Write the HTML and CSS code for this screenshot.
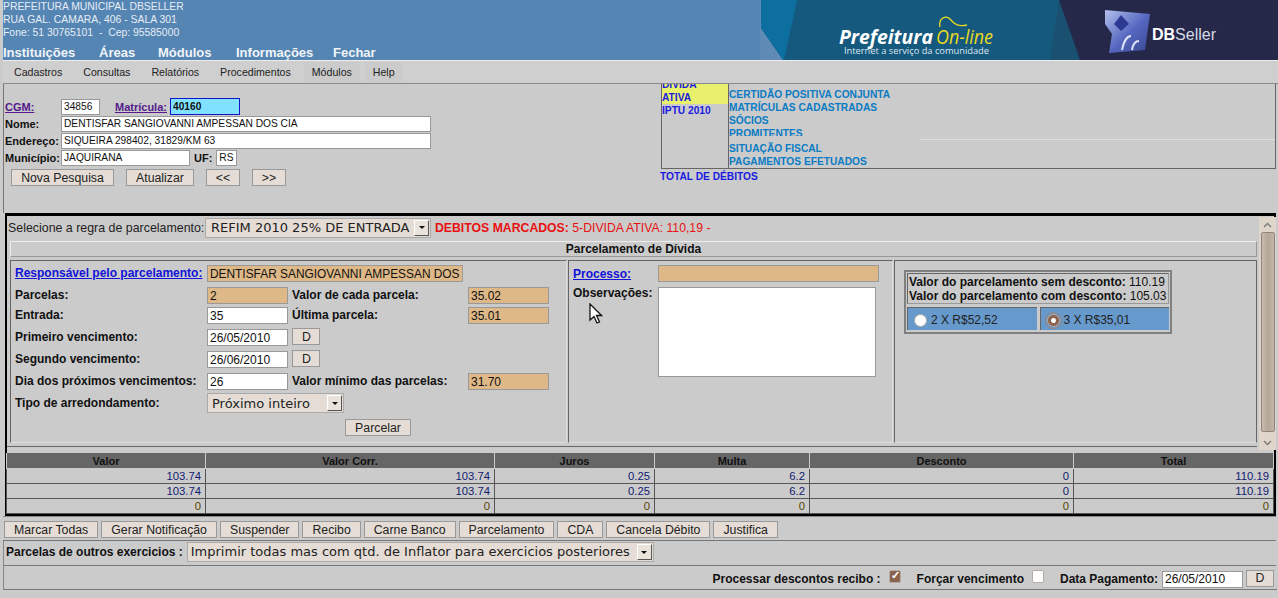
FILE: index.html
```html
<!DOCTYPE html>
<html lang="pt-BR">
<head>
    <meta charset="UTF-8">
    <title>Prefeitura On-line</title>
    <link rel="stylesheet" href="styles.css">
</head>
<body>
    <header class="topo">
        <div class="topo-texto">
            <div class="endereco">PREFEITURA MUNICIPAL DBSELLER<br>RUA GAL. CAMARA, 406 - SALA 301<br>Fone: 51 30765101 &nbsp;-&nbsp; Cep: 95585000</div>
            <nav class="menu-areas">
                <a class="a1">Instituições</a><a class="a2">Áreas</a><a class="a3">Módulos</a><a class="a4">Informações</a><a>Fechar</a>
            </nav>
        </div>
        <div class="banner">
            <svg width="518" height="60" viewBox="0 0 518 60">
                <defs>
                    <linearGradient id="cubo" x1="0" y1="0" x2="1" y2="1">
                        <stop offset="0" stop-color="#b4c0ec"/>
                        <stop offset="0.55" stop-color="#5566c0"/>
                        <stop offset="1" stop-color="#39478f"/>
                    </linearGradient>
                </defs>
                <rect width="518" height="60" fill="#15597f"/>
                <polygon points="0,0 1,0 1,28 23,60 0,60" fill="#5f8ab6"/>
                <polygon points="1,0 37,0 24,60 23,60 1,28" fill="#0d6f9f"/>
                <polygon points="299,0 320,60 290,60" fill="#1b5170"/>
                <polygon points="299,0 518,0 518,60 320,60" fill="#26284a"/>
                <text x="79" y="44" class="pref" textLength="94" lengthAdjust="spacingAndGlyphs">Prefeitura</text>
                <text x="176" y="44" class="online" textLength="57" lengthAdjust="spacingAndGlyphs">On-line</text>
                <path d="M180 27 C178 18 186 15 190 19 C194 24 198 27 207 25" fill="none" stroke="#e9d821" stroke-width="1.3"/>
                <text x="84" y="54" class="slogan" textLength="145" lengthAdjust="spacingAndGlyphs">Internet a serviço da comunidade</text>
                <polygon points="345,10 390,14 385,50 349,53 352,34 345,24" fill="url(#cubo)"/>
                <polygon points="361,15 369,24 361,31 354,24" fill="#2c3a94"/>
                <path d="M362 50 C364 40 368 36 371 36 M372 50 C373 44 376 41 379 41" fill="none" stroke="#dfe5f8" stroke-width="2"/>
                <text x="392" y="40" class="marca"><tspan class="db">DB</tspan><tspan class="seller">Seller</tspan></text>
            </svg>
        </div>
    </header>

    <nav class="menu">
        <a>Cadastros</a><a>Consultas</a><a>Relatórios</a><a>Procedimentos</a><a class="ativo">Módulos</a><a class="ativo">Help</a>
    </nav>

    <section class="pesquisa">
        <div class="dados">
            <div class="linha">
                <a class="lk-visitado lb-cgm">CGM: </a>
                <input class="campo w39" value="34856">
                <a class="lk-visitado lb-mat">Matrícula:</a>
                <input class="campo w70 destaque" value="40160">
            </div>
            <div class="linha"><b class="lb-cgm">Nome:</b><input class="campo w370" value="DENTISFAR SANGIOVANNI AMPESSAN DOS CIA"></div>
            <div class="linha"><b class="lb-cgm">Endereço:</b><input class="campo w370" value="SIQUEIRA 298402, 31829/KM 63"></div>
            <div class="linha"><b class="lb-cgm">Município:</b><input class="campo w128" value="JAQUIRANA"><b class="lb-uf">UF:</b><input class="campo w21" value="RS"></div>
            <div class="botoes-pesq">
                <button class="btn b-nova">Nova Pesquisa</button><button class="btn b-atu">Atualizar</button><button class="btn b-seta">&lt;&lt;</button><button class="btn b-seta">&gt;&gt;</button>
            </div>
        </div>
        <div class="quadro-wrap">
            <div class="quadro">
                <div class="tipos">
                    <div class="tipo-ativo"><div class="tipo-nome">DIVIDA<br>ATIVA</div></div>
                    <div class="tipo">IPTU 2010</div>
                </div>
                <div class="links">
                    <a>CERTIDÃO POSITIVA CONJUNTA</a>
                    <a>MATRÍCULAS CADASTRADAS</a>
                    <a>SÓCIOS</a>
                    <a class="prom">PROMITENTES</a>
                    <div class="divisor"></div>
                    <a>SITUAÇÃO FISCAL</a>
                    <a>PAGAMENTOS EFETUADOS</a>
                </div>
            </div>
            <div class="total">TOTAL DE DÉBITOS</div>
        </div>
    </section>

    <section class="parcelamento">
        <div class="conteudo">
            <div class="regra">
                <span>Selecione a regra de parcelamento:</span>
                <div class="select s-regra"><span>REFIM 2010 25% DE ENTRADA</span><i class="seta"></i></div>
                <span class="marcados"><b>DEBITOS MARCADOS:</b> 5-DIVIDA ATIVA: 110,19 -</span>
            </div>
            <div class="titulo">Parcelamento de Dívida</div>
            <div class="paineis">
                <div class="painel p1">
                    <div class="grade">
                        <a class="lk-azul resp">Responsável pelo parcelamento:</a>
                        <input class="campo ro w-resp" value="DENTISFAR SANGIOVANNI AMPESSAN DOS">

                        <b>Parcelas:</b><input class="campo ro w81" value="2">
                        <b>Valor de cada parcela:</b><input class="campo ro w81" value="35.02">

                        <b>Entrada:</b><input class="campo w81" value="35">
                        <b>Última parcela:</b><input class="campo ro w81" value="35.01">

                        <b>Primeiro vencimento:</b><input class="campo w81" value="26/05/2010">
                        <button class="btn b-d">D</button>

                        <b>Segundo vencimento:</b><input class="campo w81" value="26/06/2010">
                        <button class="btn b-d">D</button>

                        <b>Dia dos próximos vencimentos:</b><input class="campo w81" value="26">
                        <b>Valor mínimo das parcelas:</b><input class="campo ro w81" value="31.70">

                        <b class="t-arr">Tipo de arredondamento:</b>
                        <div class="select s-arr"><span>Próximo inteiro</span><i class="seta"></i></div>
                    </div>
                    <div class="parcelar"><button class="btn b-parc">Parcelar</button></div>
                </div>
                <div class="painel p2">
                    <div class="proc"><a class="lk-azul lb-proc">Processo:</a><input class="campo ro w-proc"></div>
                    <div class="obs"><b class="lb-proc">Observações:</b><textarea class="area"></textarea></div>
                    <svg class="cursor" width="14" height="22" viewBox="0 0 14 22"><path d="M1 1 L1 17 L5 13.5 L8 20 L10.5 19 L7.5 12.5 L12.5 12.5 Z" fill="#fff" stroke="#111" stroke-width="1.3"/></svg>
                </div>
                <div class="painel p3">
                    <div class="resumo">
                        <div class="valores">
                            <div><b>Valor do parcelamento sem desconto:</b> 110.19</div>
                            <div><b>Valor do parcelamento com desconto:</b> 105.03</div>
                        </div>
                        <div class="opcoes">
                            <div class="opcao"><i class="radio"></i>2 X R$52,52</div>
                            <div class="opcao"><i class="radio marcado"></i>3 X R$35,01</div>
                        </div>
                    </div>
                </div>
            </div>
            <div class="rolagem">
                <div class="ponta">
                    <svg width="9" height="6" viewBox="0 0 9 6"><path d="M1 5 L4.5 1.5 L8 5" fill="none" stroke="#777" stroke-width="1.3"/></svg>
                </div>
                <div class="trilho"><div class="polegar"></div></div>
                <div class="ponta">
                    <svg width="9" height="6" viewBox="0 0 9 6"><path d="M1 1 L4.5 4.5 L8 1" fill="none" stroke="#777" stroke-width="1.3"/></svg>
                </div>
            </div>
        </div>
        <table class="tabela">
            <colgroup><col class="c1"><col class="c2"><col class="c3"><col class="c4"><col class="c5"><col></colgroup>
            <thead>
                <tr><th>Valor</th><th>Valor Corr.</th><th>Juros</th><th>Multa</th><th>Desconto</th><th>Total</th></tr>
            </thead>
            <tbody>
                <tr class="azul"><td>103.74</td><td>103.74</td><td>0.25</td><td>6.2</td><td>0</td><td>110.19</td></tr>
                <tr class="azul"><td>103.74</td><td>103.74</td><td>0.25</td><td>6.2</td><td>0</td><td>110.19</td></tr>
                <tr class="ouro"><td>0</td><td>0</td><td>0</td><td>0</td><td>0</td><td>0</td></tr>
            </tbody>
        </table>
    </section>

    <div class="acoes">
        <button class="btn">Marcar Todas</button><button class="btn">Gerar Notificação</button><button class="btn">Suspender</button><button class="btn">Recibo</button><button class="btn">Carne Banco</button><button class="btn">Parcelamento</button><button class="btn">CDA</button><button class="btn">Cancela Débito</button><button class="btn">Justifica</button>
    </div>
    <div class="outros">
        <b>Parcelas de outros exercicios :</b>
        <div class="select s-outros"><span>Imprimir todas mas com qtd. de Inflator para exercicios posteriores</span><i class="seta"></i></div>
    </div>
    <div class="rodape">
        <b>Processar descontos recibo :</b><i class="check marcado"></i>
        <b>Forçar vencimento</b><i class="check"></i>
        <b class="data">Data Pagamento:</b><input class="campo w81" value="26/05/2010"><button class="btn b-d">D</button>
    </div>
</body>
</html>
```

FILE: styles.css
```css
html, body {
    margin: 0;
    height: 598px;
    overflow: hidden;
}
body {
    background-color: #cbcbcb;
    font-family: "Liberation Sans", Arial, sans-serif;
    font-size: 11px;
    color: #111;
    border-left: 3px solid #cbcbcb;
    box-sizing: border-box;
    width: 1278px;
}
input, button, textarea {
    font-family: "Liberation Sans", Arial, sans-serif;
    margin: 0;
    box-sizing: border-box;
}

/* topo */
.topo {
    display: flex;
    justify-content: space-between;
    height: 60px;
    margin-left: -3px;
    background-color: #5585b3;
}
.topo-texto {
    padding-left: 3px;
}
.endereco {
    color: #e6edf5;
    font-size: 10.4px;
    line-height: 13px;
    height: 45px;
}
.menu-areas {
    display: flex;
    color: #f1f4f8;
    font-size: 13px;
    font-weight: bold;
    line-height: 16px;
}
.menu-areas .a1 { width: 96px; }
.menu-areas .a2 { width: 59px; }
.menu-areas .a3 { width: 78px; }
.menu-areas .a4 { width: 97px; }
.banner {
    width: 518px;
    height: 60px;
}
.pref {
    font: italic bold 20px "Open Sans", sans-serif;
    fill: #fff;
}
.online {
    font: italic 20px "Open Sans", sans-serif;
    fill: #e9d821;
}
.slogan {
    font: 9.5px "Open Sans", sans-serif;
    fill: #dfe7ee;
}
.marca {
    font: 16px "Liberation Sans", sans-serif;
}
.db {
    font-weight: bold;
    fill: #fff;
}
.seller {
    fill: #d7dae6;
}

/* menu */
.menu {
    display: flex;
    align-items: center;
    height: 24px;
    padding-left: 6px;
    margin-left: -3px;
    background-color: #cfcfcf;
    border-top: 1px solid #ececec;
    border-bottom: 1px solid #8a8a8a;
    box-sizing: border-box;
}
.menu a {
    padding: 4px 8px;
    margin-right: 5px;
    font-size: 10.6px;
    color: #222;
}
.menu .ativo {
    background-color: #cbcbcb;
}

/* pesquisa */
.pesquisa {
    display: flex;
    height: 129px;
    box-sizing: border-box;
    border-left: 1px solid #777;
}
.dados {
    width: 657px;
    padding-top: 14px;
}
.linha {
    display: flex;
    align-items: center;
    height: 17px;
}
.lb-cgm {
    width: 57px;
    padding-left: 1px;
    box-sizing: border-box;
}
.lb-mat {
    margin: 0 3px 0 15px;
}
.lb-uf {
    margin: 0 4px;
}
.lk-visitado {
    color: #551a8b;
    font-weight: bold;
    text-decoration: underline;
}
.campo {
    height: 16px;
    border: 1px solid #999;
    background-color: #fff;
    font-size: 10.2px;
    padding: 0 2px;
    color: #111;
}
.w39 { width: 39px; }
.w70 { width: 70px; height: 17px; }
.w370 { width: 370px; }
.w128 { width: 129px; }
.w21 { width: 21px; }
.w81 { width: 81px; height: 17px; font-size: 12px; }
.destaque {
    background-color: #80e2fe;
    border-color: #1212c8;
    font-weight: bold;
}
.ro {
    background-color: #deb887;
}
.botoes-pesq {
    display: flex;
    margin: 3px 0 0 7px;
    gap: 12px;
}
.btn {
    height: 17px;
    padding: 0 9px;
    border: 1px solid #999;
    background-color: #e5ddd5;
    color: #222;
    font-size: 12.3px;
}
.b-nova { width: 103px; padding: 0; }
.b-atu { width: 68px; padding: 0; }
.b-seta { width: 34px; padding: 0; }
.quadro-wrap {
    width: 615px;
}
.quadro {
    display: flex;
    height: 85px;
    border: 1px solid #666;
    border-top: 0;
    box-sizing: border-box;
    font-size: 10.2px;
    font-weight: bold;
}
.tipos {
    width: 67px;
    flex: none;
    border-right: 1px solid #666;
    box-sizing: border-box;
    color: #1a1ae0;
}
.tipo-ativo {
    background-color: #e9f06e;
    height: 20px;
    overflow: hidden;
}
.tipo-nome {
    margin-top: -6px;
    line-height: 13px;
}
.tipo {
    line-height: 13px;
}
.links {
    flex: 1;
    padding-top: 4px;
    color: #0a7bc4;
}
.links a {
    display: block;
    line-height: 13px;
}
.links .prom {
    height: 9px;
    overflow: hidden;
}
.divisor {
    height: 1px;
    margin: 3px 0 2px 191px;
    background-color: #dedede;
}
.total {
    font-size: 10.2px;
    font-weight: bold;
    color: #1a1ae0;
    margin: 1px 0 0 -1px;
    line-height: 13px;
}

/* parcelamento */
.parcelamento {
    border: 2px solid #000;
    border-top-width: 3px;
    margin-left: 2px;
    width: 1271px;
    box-sizing: border-box;
    height: 303px;
}
.conteudo {
    position: relative;
    height: 237px;
    padding-right: 17px;
    box-sizing: border-box;
}
.regra {
    display: flex;
    align-items: center;
    height: 23px;
    padding-left: 1px;
    font-size: 12.4px;
    color: #222;
}
.regra > span:first-child {
    width: 197px;
}
.select {
    display: flex;
    align-items: center;
    justify-content: space-between;
    box-sizing: border-box;
    background-color: #e5ddd5;
    border: 1px solid #aaa;
    font-family: "DejaVu Sans", sans-serif;
    font-size: 13px;
    color: #222;
    white-space: nowrap;
}
.s-regra {
    width: 226px;
    height: 20px;
    padding-left: 5px;
}
.s-arr {
    width: 137px;
    height: 20px;
    padding-left: 4px;
    grid-column: 2 / 5;
}
.s-outros {
    width: 467px;
    height: 20px;
    padding-left: 3px;
}
.seta {
    width: 15px;
    height: 16px;
    margin-right: 1px;
    background-color: #eae3dc;
    border: 1px solid;
    border-color: #fff #555 #555 #fff;
    box-sizing: border-box;
    display: flex;
    align-items: center;
    justify-content: center;
}
.seta::after {
    content: "";
    border: 3px solid transparent;
    border-top-color: #111;
    border-bottom: 0;
}
.marcados {
    color: #e81010;
    margin-left: 4px;
    font-size: 12.25px;
}
.titulo {
    height: 16px;
    margin: 2px 0 0 3px;
    border: 1px solid #999;
    border-top-color: #eee;
    border-left-color: #eee;
    box-sizing: border-box;
    text-align: center;
    font-size: 12px;
    font-weight: bold;
    line-height: 14px;
}
.paineis {
    display: flex;
    height: 187px;
    margin-top: 3px;
    padding-left: 3px;
    border-bottom: 1px solid #666;
    box-sizing: border-box;
}
.painel {
    border-top: 1px solid #666;
    border-left: 1px solid #666;
    border-right: 1px solid #ddd;
    border-bottom: 1px solid #ddd;
    box-sizing: border-box;
    height: 183px;
}
.p1 { width: 557px; margin-right: 1px; padding: 4px 0 0 4px; }
.p2 { width: 325px; margin-right: 1px; padding: 4px 0 0 4px; position: relative; }
.p3 { flex: 1; padding: 9px 0 0 9px; border-right-color: #666; }
.grade {
    display: grid;
    grid-template-columns: 192px 85px 176px 81px;
    grid-template-rows: 22px 20px 22px 22px 22px 20px 26px;
    align-items: start;
    font-size: 12px;
    line-height: 17px;
}
.w-resp {
    grid-column: 2 / 5;
    width: 256px;
    font-size: 11.9px;
    height: 17px;
}
.grade .b-d {
    width: 28px;
    margin-top: -1px;
    grid-column: 3 / 5;
}
.t-arr {
    line-height: 21px;
}
.lk-azul {
    color: #1212d8;
    font-weight: bold;
    text-decoration: underline;
    font-size: 12px;
}
.parcelar {
    margin-left: 330px;
}
.b-parc {
    width: 66px;
    padding: 0;
}
.proc {
    display: flex;
    align-items: center;
    height: 17px;
}
.lb-proc {
    width: 85px;
    flex: none;
}
.w-proc {
    width: 221px;
    height: 17px;
}
.obs {
    display: flex;
    margin-top: 5px;
    font-size: 12px;
    line-height: 13px;
}
.area {
    width: 218px;
    height: 90px;
    border: 1px solid #999;
    background-color: #fff;
    resize: none;
}
.cursor {
    position: absolute;
    left: 20px;
    top: 42px;
}
.resumo {
    width: 268px;
    height: 64px;
    border: 2px solid #808080;
    padding: 1px;
    box-sizing: border-box;
}
.valores {
    height: 31px;
    border: 1px solid #999;
    border-top-color: #666;
    border-left-color: #666;
    font-size: 12px;
    line-height: 14px;
    padding: 1px;
    white-space: nowrap;
    box-sizing: border-box;
}
.opcoes {
    display: flex;
    gap: 3px;
    margin-top: 3px;
}
.opcao {
    flex: 1;
    display: flex;
    align-items: center;
    height: 23px;
    background-color: #6699cc;
    border-top: 1px solid #666;
    border-left: 1px solid #666;
    box-sizing: border-box;
    font-size: 12px;
    color: #222;
    padding: 2px 0 0 6px;
}
.radio {
    width: 13px;
    height: 13px;
    flex: none;
    border-radius: 50%;
    background-color: #fff;
    border: 1px solid #b5aca4;
    box-sizing: border-box;
    margin-right: 4px;
}
.radio.marcado {
    background: radial-gradient(circle, #fff 2px, #8b6450 3px);
    outline: 1px solid #a5806e;
    outline-offset: 1px;
}

/* barra de rolagem */
.rolagem {
    position: absolute;
    right: -2px;
    top: 1px;
    bottom: 3px;
    width: 17px;
    display: flex;
    flex-direction: column;
    background-color: #dfd5ca;
}
.ponta {
    height: 15px;
    flex: none;
    display: flex;
    align-items: center;
    justify-content: center;
}
.trilho {
    flex: 1;
    padding: 0 1px 3px 2px;
    min-height: 0;
}
.polegar {
    height: 100%;
    background: linear-gradient(to right, #c9bcae, #b3a797 50%, #c4b7a9);
    border: 1px solid #8e857c;
    border-radius: 2px;
    box-sizing: border-box;
}

/* tabela */
.tabela {
    width: calc(100% + 1px);
    margin-left: -1px;
    border-collapse: collapse;
    table-layout: fixed;
    font-size: 11.3px;
}
.c1 { width: 199px; }
.c2 { width: 289px; }
.c3 { width: 160px; }
.c4 { width: 155px; }
.c5 { width: 264px; }
.tabela th {
    background-color: #666;
    color: #111;
    border: 1px solid #cbcbcb;
    border-top: 0;
    height: 15px;
    padding: 0;
    font-size: 11px;
}
.tabela td {
    border: 1px solid #555;
    height: 14px;
    padding: 0 4px;
    text-align: right;
    background-color: #cbcbcb;
}
.azul td { color: #102070; }
.ouro td { color: #5a4500; }

/* rodape */
.acoes {
    display: flex;
    gap: 3px;
    height: 25px;
    padding: 4px 0 0 1px;
    margin-right: 2px;
    border-top: 1px solid #888;
    border-bottom: 1px solid #777;
    box-sizing: border-box;
}
.outros {
    display: flex;
    gap: 4px;
    height: 25px;
    padding: 1px 0 0 2px;
    margin-right: 2px;
    border-left: 1px solid #888;
    border-bottom: 1px solid #777;
    box-sizing: border-box;
    font-size: 12px;
    line-height: 20px;
}
.rodape {
    display: flex;
    align-items: center;
    justify-content: flex-end;
    height: 24px;
    margin-right: 1px;
    padding: 3px 3px 0 0;
    border-left: 1px solid #888;
    border-bottom: 1px solid #777;
    box-sizing: border-box;
    font-size: 12px;
}
.check {
    width: 12px;
    height: 13px;
    margin: 0 16px 5px 8px;
    border-radius: 2px;
    background-color: #fff;
    border: 1px solid #b5aca4;
    box-sizing: border-box;
}
.check.marcado {
    background-color: #8b6450;
    position: relative;
}
.check.marcado::after {
    content: "✓";
    position: absolute;
    left: 1px;
    top: -2px;
    font-style: normal;
    font-size: 11px;
    font-weight: bold;
    color: #fff;
}
.data { margin-right: 4px; }
.rodape .b-d {
    width: 28px;
    margin: 0 0 2px 3px;
    padding: 0;
}
```
